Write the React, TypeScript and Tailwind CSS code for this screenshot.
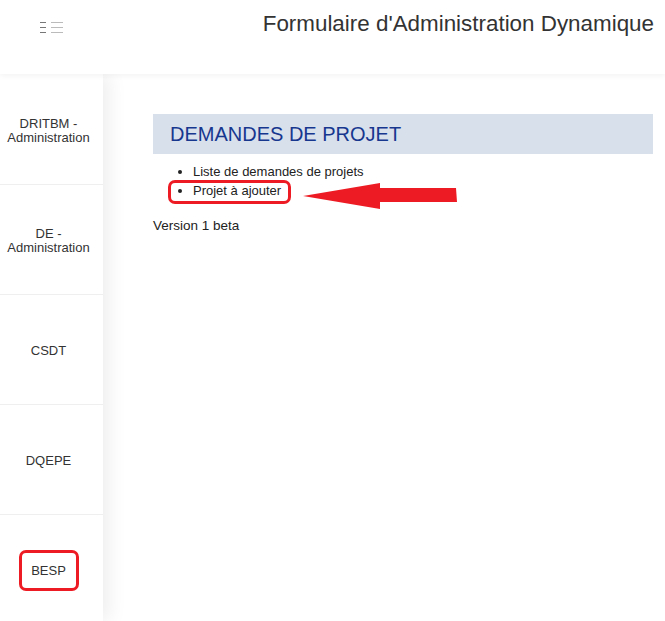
import React from "react";

const sections = [
  { label: ["DRITBM -", "Administration"] },
  { label: ["DE -", "Administration"] },
  { label: ["CSDT"] },
  { label: ["DQEPE"] },
  { label: ["BESP"], marked: true },
];

function MenuIcon() {
  return (
    <svg width="24" height="13" viewBox="0 0 24 13" aria-hidden="true">
      <g strokeWidth="1">
        <line x1="0" y1="1.5" x2="6" y2="1.5" stroke="#777" />
        <line x1="0" y1="6.5" x2="6" y2="6.5" stroke="#777" />
        <line x1="0" y1="11.5" x2="6" y2="11.5" stroke="#777" />
        <line x1="11" y1="1.5" x2="23" y2="1.5" stroke="#bbb" />
        <line x1="11" y1="6.5" x2="23" y2="6.5" stroke="#bbb" />
        <line x1="11" y1="11.5" x2="23" y2="11.5" stroke="#bbb" />
      </g>
    </svg>
  );
}

function RedArrow() {
  return (
    <svg width="156" height="28" viewBox="0 0 156 28" aria-hidden="true">
      <polygon
        points="0,14 77,1 77,6 153,6 154,20 77,20 77,27"
        fill="#ed1c24"
      />
    </svg>
  );
}

export default function App() {
  return (
    <div className="relative h-[621px] w-[665px] overflow-hidden bg-white font-['Liberation_Sans',Arial,sans-serif] text-[#333]">
      {/* header */}
      <header className="relative z-20 flex h-[74px] items-start bg-white shadow-[0_2px_6px_rgba(0,0,0,0.05)]">
        <div className="flex w-[103px] justify-center pt-[21px]">
          <MenuIcon />
        </div>
        <div className="flex-1 pr-[11px] pt-[10px] text-right text-[22.4px] leading-[28px] text-[#333]">
          Formulaire d'Administration Dynamique
        </div>
      </header>

      <div className="flex h-[547px]">
        {/* sidebar */}
        <nav className="relative z-10 flex w-[103px] shrink-0 flex-col bg-white pt-[1px] shadow-[6px_0_18px_rgba(0,0,0,0.07)]">
          {sections.map((s, i) => (
            <div
              key={i}
              className="flex h-[110px] shrink-0 flex-col items-center justify-center border-b border-[#efefef] pr-[6px] pt-[2px] text-center text-[13px] leading-[14px] text-[#333]"
            >
              {s.marked ? (
                <div className="flex h-[41px] w-[60px] items-center justify-center rounded-[7px] border-[3px] border-[#ed1c24]">
                  {s.label[0]}
                </div>
              ) : (
                s.label.map((l) => <div key={l}>{l}</div>)
              )}
            </div>
          ))}
        </nav>

        {/* main */}
        <main className="flex-1 pl-[50px] pr-[12px] pt-[40px]">
          <div className="flex h-[40px] items-center bg-[#d8e0ec] pl-[17px] text-[20px] text-[#17378f]">
            DEMANDES DE PROJET
          </div>

          <ul className="mt-[8px] list-disc pl-[40px] text-[13px] leading-[19px] text-[#222]">
            <li>Liste de demandes de projets</li>
            <li className="relative">
              Projet à ajouter
              <span className="pointer-events-none absolute left-[-25px] top-[-1px] h-[24px] w-[123px] rounded-[7px] border-[3px] border-[#ed1c24]" />
              <span className="pointer-events-none absolute left-[110px] top-[1px]">
                <RedArrow />
              </span>
            </li>
          </ul>

          <p className="mt-[16px] text-[13.5px] leading-[19px] text-[#222]">
            Version 1 beta
          </p>
        </main>
      </div>
    </div>
  );
}
